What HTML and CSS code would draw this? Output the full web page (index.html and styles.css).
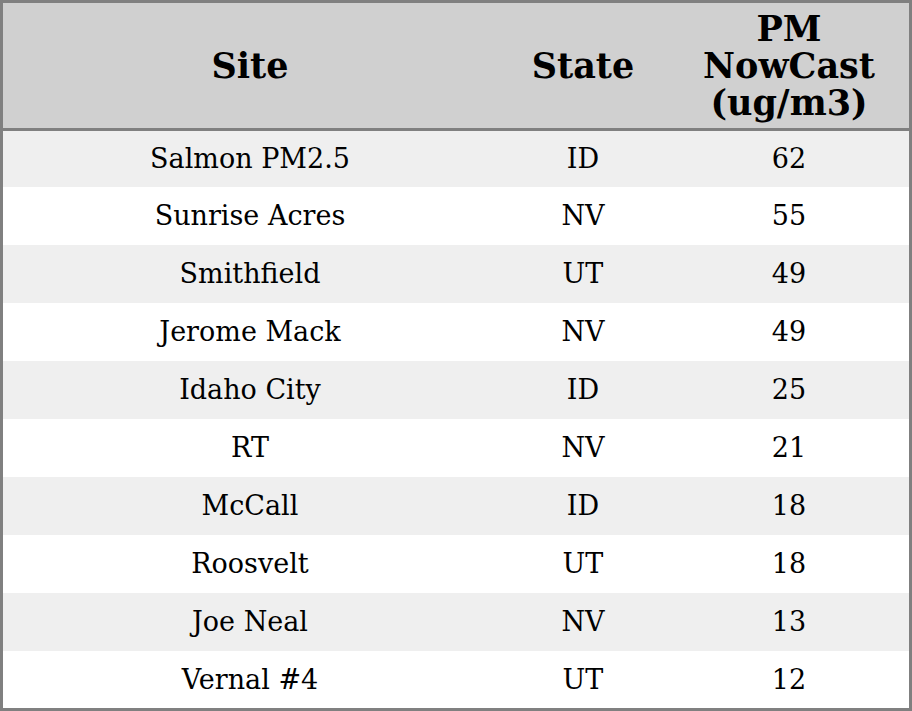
FILE: index.html
```html
<!DOCTYPE html>
<html>
<head>
<meta charset="utf-8">
<link rel="stylesheet" href="styles.css">
</head>
<body>
<table class="sites">
  <colgroup>
    <col class="c-site">
    <col class="c-state">
    <col class="c-pm">
  </colgroup>
  <thead>
    <tr class="head-row">
      <th>Site</th>
      <th>State</th>
      <th>PM<br>NowCast<br>(ug/m3)</th>
    </tr>
  </thead>
  <tbody>
    <tr class="r-first"><td>Salmon PM2.5</td><td>ID</td><td>62</td></tr>
    <tr><td>Sunrise Acres</td><td>NV</td><td>55</td></tr>
    <tr><td>Smithfield</td><td>UT</td><td>49</td></tr>
    <tr><td>Jerome Mack</td><td>NV</td><td>49</td></tr>
    <tr><td>Idaho City</td><td>ID</td><td>25</td></tr>
    <tr><td>RT</td><td>NV</td><td>21</td></tr>
    <tr><td>McCall</td><td>ID</td><td>18</td></tr>
    <tr><td>Roosvelt</td><td>UT</td><td>18</td></tr>
    <tr><td>Joe Neal</td><td>NV</td><td>13</td></tr>
    <tr class="r-last"><td>Vernal #4</td><td>UT</td><td>12</td></tr>
  </tbody>
</table>
</body>
</html>
```
FILE: styles.css
```css
html, body {
  margin: 0;
  padding: 0;
  background: #ffffff;
}

.sites {
  width: 912px;
  border: 3px solid #808080;
  border-collapse: separate;
  border-spacing: 0;
  table-layout: fixed;
  font-family: "DejaVu Serif", serif;
  color: #000000;
}

.c-site { width: 494px; }
.c-state { width: 172px; }
.c-pm { width: 240px; }

.sites th,
.sites td {
  padding: 0;
  text-align: center;
  vertical-align: middle;
}

.sites th {
  background: #d0d0d0;
  font-size: 35px;
  font-weight: bold;
  line-height: 37px;
  border-bottom: 3px solid #808080;
}

.head-row { height: 128px; }

.sites td {
  font-size: 27px;
  line-height: 30px;
}

.sites tbody tr { height: 58px; }
.sites tbody tr.r-first { height: 56px; }
.sites tbody tr.r-last { height: 57px; }

.sites tbody tr:nth-child(odd) td { background: #efefef; }
.sites tbody tr:nth-child(even) td { background: #ffffff; }
```
